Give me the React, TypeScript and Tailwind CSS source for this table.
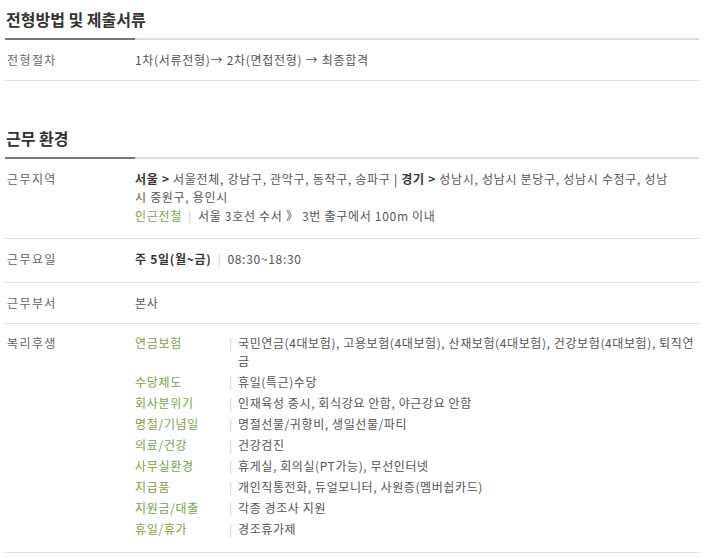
import React from "react";

const font = { fontFamily: '"Noto Sans CJK KR", "Noto Sans", sans-serif' };

function SectionTitle({ children, className = "" }: { children: React.ReactNode; className?: string }) {
  return (
    <div className={className}>
      <div className="pt-[7px] pb-[7px] pl-[1px] text-[16px] leading-[24px] font-bold tracking-[0px] text-[#333]">
        {children}
      </div>
      <div className="flex h-[2px]">
        <div className="w-[130px] bg-[#777]" />
        <div className="flex-1 bg-[#ddd]" />
      </div>
    </div>
  );
}

function Row({ label, children, className = "py-[11px]" }: { label: string; children: React.ReactNode; className?: string }) {
  return (
    <div className={`flex border-b border-[#e2e2e2] pl-[2px] ${className}`}>
      <div className="w-[128px] shrink-0 text-[#666] tracking-[1.4px]">{label}</div>
      <div className="flex-1 text-[#555]">{children}</div>
    </div>
  );
}

const Sep = () => <span className="mx-[6px] text-[#d0d0d0]">|</span>;

const benefits: { k: string; v: string[] }[] = [
  { k: "연금보험", v: ["국민연금(4대보험), 고용보험(4대보험), 산재보험(4대보험), 건강보험(4대보험), 퇴직연", "금"] },
  { k: "수당제도", v: ["휴일(특근)수당"] },
  { k: "회사분위기", v: ["인재육성 중시, 회식강요 안함, 야근강요 안함"] },
  { k: "명절/기념일", v: ["명절선물/귀향비, 생일선물/파티"] },
  { k: "의료/건강", v: ["건강검진"] },
  { k: "사무실환경", v: ["휴게실, 회의실(PT가능), 무선인터넷"] },
  { k: "지급품", v: ["개인직통전화, 듀얼모니터, 사원증(멤버쉽카드)"] },
  { k: "지원금/대출", v: ["각종 경조사 지원"] },
  { k: "휴일/휴가", v: ["경조휴가제"] },
];

export default function App() {
  return (
    <div style={font} className="w-[710px] h-[559px] bg-white pl-[5px] pr-[11px] text-[12px] leading-[18px] overflow-hidden">
      <SectionTitle>전형방법 및 제출서류</SectionTitle>
      <div className="tracking-[0.7px]">
        <Row label="전형절차">1차(서류전형)→ 2차(면접전형) → 최종합격</Row>
      </div>

      <SectionTitle className="mt-[38px]">근무 환경</SectionTitle>
      <div className="tracking-[0.7px]">
        <Row label="근무지역" className="pt-[11px] pb-[13px]">
          <div className="whitespace-nowrap">
            <b className="text-[#333]">서울</b> <b className="text-[#333]">&gt;</b> 서울전체, 강남구, 관악구, 동작구, 송파구{" "}
            <span className="text-[#333]">|</span> <b className="text-[#333]">경기</b> <b className="text-[#333]">&gt;</b> 성남시, 성남시 분당구, 성남시 수정구, 성남
          </div>
          <div className="whitespace-nowrap">시 중원구, 용인시</div>
          <div className="mt-[1px] whitespace-nowrap">
            <span className="text-[#7ba23f]">인근전철</span>
            <Sep />
            서울 3호선 수서 》 3번 출구에서 100m 이내
          </div>
        </Row>
        <Row label="근무요일" className="pt-[11px] pb-[14px]">
          <b className="text-[#333]">주 5일(월~금)</b>
          <Sep />
          <span>08:30~18:30</span>
        </Row>
        <Row label="근무부서">본사</Row>
        <Row label="복리후생" className="pt-[10px] pb-[14px]">
          <div className="flex flex-col gap-[3px]">
            {benefits.map((b) => (
              <div key={b.k} className="flex">
                <div className="w-[94px] shrink-0 text-[#7ba23f]">{b.k}</div>
                <div className="w-[9px] shrink-0 text-[#d0d0d0]">|</div>
                <div className="flex-1 tracking-[0.6px]">
                  {b.v.map((l, i) => (
                    <div key={i} className="whitespace-nowrap">{l}</div>
                  ))}
                </div>
              </div>
            ))}
          </div>
        </Row>
      </div>
    </div>
  );
}
